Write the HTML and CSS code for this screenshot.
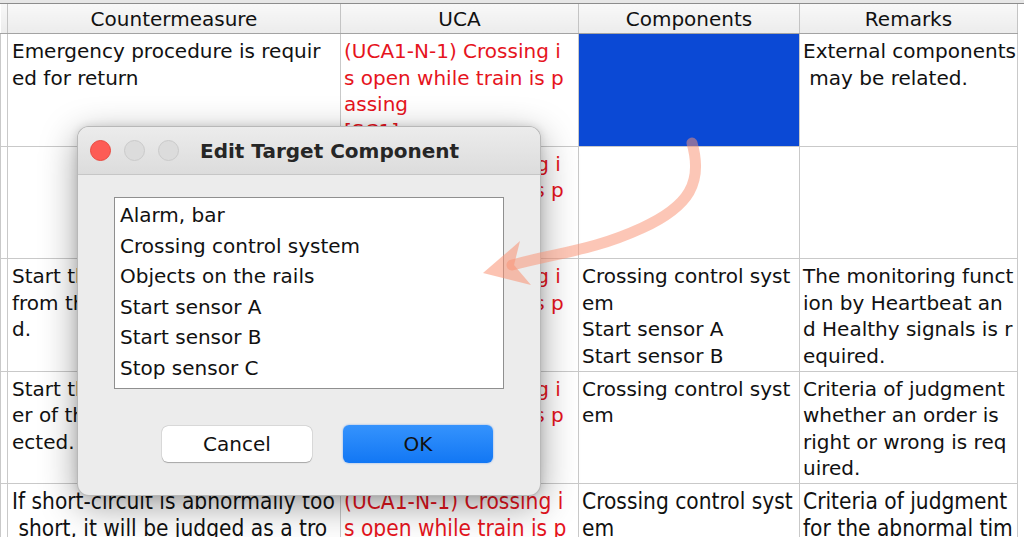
FILE: index.html
```html
<!DOCTYPE html>
<html lang="en">
<head>
  <meta charset="UTF-8">
  <title>Edit Target Component</title>
  <link rel="stylesheet" href="styles.css">
</head>
<body>
  <div class="screen">
    <div class="top-strip"></div>
    <table class="grid">
      <colgroup>
        <col class="c0"><col class="c1"><col class="c2"><col class="c3"><col class="c4">
      </colgroup>
      <thead>
        <tr>
          <th></th>
          <th>Countermeasure</th>
          <th>UCA</th>
          <th>Components</th>
          <th>Remarks</th>
        </tr>
      </thead>
      <tbody>
        <tr>
          <td></td>
          <td>Emergency procedure is requir<br>ed for return</td>
          <td class="uca">(UCA1-N-1) Crossing i<br>s open while train is p<br>assing<br>[SC1]</td>
          <td class="selected"></td>
          <td>External components<br> may be related.</td>
        </tr>
        <tr>
          <td></td>
          <td></td>
          <td class="uca">(UCA1-N-1) Crossing i<br>s open while train is p<br>assing</td>
          <td></td>
          <td></td>
        </tr>
        <tr>
          <td></td>
          <td>Start the check of signals<br>from the crossing is require<br>d.</td>
          <td class="uca">(UCA1-N-1) Crossing i<br>s open while train is p<br>assing</td>
          <td>Crossing control syst<br>em<br>Start sensor A<br>Start sensor B</td>
          <td>The monitoring funct<br>ion by Heartbeat an<br>d Healthy signals is r<br>equired.</td>
        </tr>
        <tr>
          <td></td>
          <td>Start the check of the ord<br>er of the signals to be det<br>ected.</td>
          <td class="uca">(UCA1-N-1) Crossing i<br>s open while train is p<br>assing</td>
          <td>Crossing control syst<br>em</td>
          <td>Criteria of judgment<br>whether an order is<br>right or wrong is req<br>uired.</td>
        </tr>
        <tr class="narrow">
          <td></td>
          <td>If short-circuit is abnormally too<br> short, it will be judged as a tro</td>
          <td class="uca">(UCA1-N-1) Crossing i<br>s open while train is p</td>
          <td>Crossing control syst<br>em</td>
          <td>Criteria of judgment<br>for the abnormal tim</td>
        </tr>
      </tbody>
    </table>

    <div class="dialog">
      <div class="dialog-title">
        <span class="light red"></span>
        <span class="light"></span>
        <span class="light"></span>
        <span class="dialog-name">Edit Target Component</span>
      </div>
      <div class="dialog-body">
        <ul class="item-list">
          <li>Alarm, bar</li>
          <li>Crossing control system</li>
          <li>Objects on the rails</li>
          <li>Start sensor A</li>
          <li>Start sensor B</li>
          <li>Stop sensor C</li>
        </ul>
        <div class="button-row">
          <button class="btn">Cancel</button>
          <button class="btn primary">OK</button>
        </div>
      </div>
    </div>

    <!-- hint arrow from selected cell to the list -->
    <svg class="hint-arrow" viewBox="0 0 1024 537" width="1024" height="537">
      <path d="M692 143 C703 182 690 206 642 228 S562 252 512 265" fill="none" stroke="rgba(250,145,115,0.52)" stroke-width="11" stroke-linecap="round"/>
      <polygon points="483,273 520,241 514,265 531,285" fill="rgba(250,145,115,0.55)"/>
    </svg>
  </div>
</body>
</html>
```

FILE: styles.css
```css
:root {
  --grid-line: #c9c9c9;
  --header-bg: linear-gradient(180deg, #f8f8f8 0%, #ececec 100%);
  --text-main: #111;
  --text-red: #e6141d;
  --selected: #0b49d5;
  --dialog-bg: #ececec;
}
body {
  margin: 0;
  padding: 0;
  background: #fff;
  font-family: "DejaVu Sans", "Liberation Sans", sans-serif;
}
.screen {
  position: relative;
  width: 1024px;
  height: 537px;
  overflow: hidden;
  background: #fff;
}
.top-strip {
  height: 3px;
  background: #e6e6e6;
  border-bottom: 1px solid #8c8c8c;
}
.grid {
  border-collapse: collapse;
  table-layout: fixed;
  width: 1017px;
  font-size: 20px;
  color: var(--text-main);
}
.c0 { width: 7px; }
.c1 { width: 333px; }
.c2 { width: 238px; }
.c3 { width: 221px; }
.c4 { width: 218px; }
.grid th {
  height: 28px;
  padding: 1px 0 0;
  font-weight: 400;
  text-align: center;
  background: var(--header-bg);
  border-right: 1px solid #c4c4c4;
  border-bottom: 1px solid #a3a3a3;
  white-space: nowrap;
}
.grid td {
  height: 107.5px;
  padding: 4px 0 0 3px;
  vertical-align: top;
  line-height: 26.5px;
  border: 1px solid var(--grid-line);
  white-space: pre;
  overflow: hidden;
}
.grid td:nth-child(2) {
  padding-left: 4px;
}
.grid td:first-child {
  padding: 0;
}
.grid td.uca {
  color: var(--text-red);
}
.grid td.selected {
  background: var(--selected);
}
.grid tr.narrow td {
  font-family: "DejaVu Sans Condensed", "DejaVu Sans", sans-serif;
  font-stretch: condensed;
  font-size: 22.5px;
}
/* dialog */
.dialog {
  position: absolute;
  left: 77px;
  top: 126px;
  width: 464px;
  height: 370px;
  box-sizing: border-box;
  background: var(--dialog-bg);
  border: 1px solid rgba(0,0,0,0.22);
  border-radius: 12px;
  box-shadow: 0 10px 36px rgba(0,0,0,0.38), 0 0 8px rgba(0,0,0,0.12);
  overflow: hidden;
  z-index: 2;
}
.dialog-title {
  height: 47px;
  display: flex;
  align-items: center;
  padding-left: 12px;
  gap: 13px;
  background: linear-gradient(180deg, #ececec 0%, #dcdcdc 100%);
  border-bottom: 1px solid #c6c6c6;
}
.light {
  width: 21px;
  height: 21px;
  border-radius: 50%;
  background: #dcdcdc;
  border: 1px solid #cacaca;
  box-sizing: border-box;
}
.light.red {
  background: #fd5c55;
  border-color: #e9493f;
}
.dialog-name {
  margin-left: 8px;
  font-size: 20px;
  font-weight: 700;
  color: #262626;
}
.dialog-body {
  padding: 22px 0 0 36px;
}
.item-list {
  list-style: none;
  margin: 0;
  padding: 2px 0 0 5px;
  width: 390px;
  height: 192px;
  box-sizing: border-box;
  background: #fff;
  border: 1px solid #8f8f8f;
  font-size: 20px;
  line-height: 30.6px;
  color: var(--text-main);
}
.button-row {
  display: flex;
  gap: 31px;
  margin-top: 37px;
  padding-left: 48px;
}
.btn {
  width: 150px;
  height: 36px;
  border: none;
  border-radius: 6px;
  background: #fff;
  font-family: "DejaVu Sans", "Liberation Sans", sans-serif;
  font-size: 20px;
  color: #111;
  box-shadow: 0 0.5px 1px rgba(0,0,0,0.25), 0 0 0 0.5px rgba(0,0,0,0.12);
  padding: 0;
}
.btn.primary {
  background: linear-gradient(180deg, #3593fd 0%, #1277f4 100%);
  box-shadow: 0 0 2px rgba(20,110,240,0.6);
  margin-top: -1px;
  height: 38px;
}
.hint-arrow {
  position: absolute;
  left: 0;
  top: 0;
  z-index: 3;
  pointer-events: none;
}
```
